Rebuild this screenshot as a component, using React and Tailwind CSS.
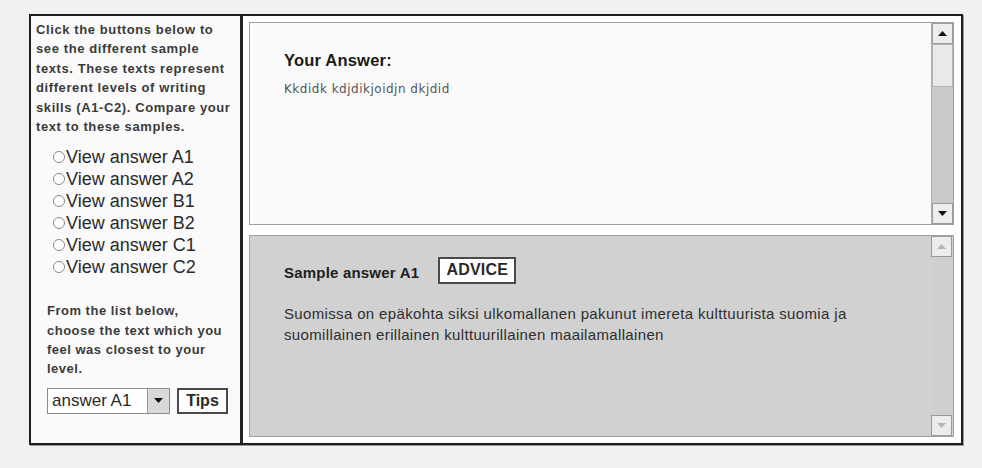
import { useState } from 'react';

const LEVELS = ['A1', 'A2', 'B1', 'B2', 'C1', 'C2'];

function Arrow({ dir, className }) {
  return (
    <svg width="9" height="5" viewBox="0 0 9 5" className={className}>
      {dir === 'up' ? <path d="M0 5 L4.5 0 L9 5 Z" fill="currentColor" /> : <path d="M0 0 L4.5 5 L9 0 Z" fill="currentColor" />}
    </svg>
  );
}

function ScrollBtn({ dir, faded }) {
  return (
    <div className={`h-[21px] w-[21px] flex items-center justify-center border border-[#9a9a9a] ${faded ? 'bg-[#ececec] text-[#b5b5b5]' : 'bg-[#ededed] text-[#111]'}`}>
      <Arrow dir={dir} />
    </div>
  );
}

function Radio({ label, checked, onChange }) {
  return (
    <label className="flex items-center h-[22px] cursor-pointer">
      <span className="w-[12px] h-[12px] rounded-full border-[1.5px] border-[#8a8a8a] bg-white mr-[1px] flex items-center justify-center">
        {checked && <span className="w-[5px] h-[5px] rounded-full bg-[#333]" />}
      </span>
      <input type="radio" className="hidden" checked={checked} onChange={onChange} />
      <span className="text-[18px] leading-[22px] text-[#2a2a2a]">{label}</span>
    </label>
  );
}

export default function App() {
  const [level, setLevel] = useState(null);

  return (
    <div className="w-[982px] h-[468px] bg-[#f1f1f1] pt-[14px] pl-[29px] font-['Liberation_Sans',Arial,sans-serif]">
      <div className="flex w-[934px] h-[431px] border-2 border-[#1e1e1e] shadow-[1px_1px_0_#9a9a9a]">
        {/* Left: instructions + level picker */}
        <div className="w-[212px] bg-[#fafafa] border-r-[3px] border-[#262626] pl-[5px] pt-[4px] flex flex-col">
          <p className="text-[13px] leading-[19.4px] font-bold text-[#3a3a3a] tracking-[0.6px] whitespace-nowrap">
            Click the buttons below to<br />
            see the different sample<br />
            texts. These texts represent<br />
            different levels of writing<br />
            skills (A1-C2). Compare your<br />
            text to these samples.
          </p>

          <div className="mt-[10px] pl-[17px] flex flex-col">
            {LEVELS.map((l) => (
              <Radio key={l} label={`View answer ${l}`} checked={level === l} onChange={() => setLevel(l)} />
            ))}
          </div>

          <p className="mt-[23px] pl-[11px] text-[13px] leading-[19.3px] font-bold text-[#3a3a3a] tracking-[0.5px] whitespace-nowrap">
            From the list below,<br />
            choose the text which you<br />
            feel was closest to your<br />
            level.
          </p>

          <div className="mt-[9px] pl-[11px] flex items-center gap-[7px]">
            <div className="flex h-[26px] w-[123px] border border-[#8c8c8c] bg-white">
              <span className="flex-1 pl-[4px] text-[17px] leading-[24px] text-[#2a2a2a]">answer A1</span>
              <span className="w-[22px] bg-[#d9d9d9] border-l border-[#9a9a9a] flex items-center justify-center text-[#111]">
                <Arrow dir="down" />
              </span>
            </div>
            <button className="h-[26px] w-[51px] border-2 border-[#4a4a4a] bg-white text-[16px] font-bold text-[#2a2a2a] leading-none">
              Tips
            </button>
          </div>
        </div>

        {/* Right: answer + sample panes */}
        <div className="flex-1 bg-white pl-[6px] pr-[7px] pt-[6px] pb-[6px] flex flex-col gap-[10px]">
          <div className="h-[203px] flex border border-[#a0a0a0] bg-[#fafafa]">
            <div className="flex-1 pl-[34px] pt-[27px]">
              <h2 className="text-[16.5px] font-bold text-[#1a1a1a] leading-[20px] tracking-[0.2px]">Your Answer:</h2>
              <p className="mt-[12px] text-[12px] text-[#555] font-['DejaVu_Sans',sans-serif] leading-[14px] tracking-[0.5px]">Kkdidk kdjdikjoidjn dkjdid</p>
            </div>
            <div className="w-[22px] flex flex-col bg-[#c9c9c9] border-l border-[#b0b0b0]">
              <ScrollBtn dir="up" />
              <div className="h-[43px] bg-[#e9e9e9] border border-[#b4b4b4]" />
              <div className="flex-1" />
              <ScrollBtn dir="down" />
            </div>
          </div>

          <div className="flex-1 flex border border-[#a3a3a3] bg-[#d1d1d1]">
            <div className="flex-1 pl-[34px] pt-[20px]">
              <div className="flex items-center gap-[19px]">
                <span className="mt-[6px] text-[15px] font-bold text-[#1e1e1e] tracking-[0.2px]">Sample answer A1</span>
                <button className="h-[27px] w-[78px] border-2 border-[#4a4a4a] bg-white text-[16px] font-semibold text-[#2a2a2a] leading-none tracking-[0.2px]">
                  ADVICE
                </button>
              </div>
              <p className="mt-[18px] text-[15px] leading-[21px] text-[#2e2e2e] tracking-[0.35px] whitespace-nowrap">
                Suomissa on epäkohta siksi ulkomallanen pakunut imereta kulttuurista suomia ja
                <br />
                suomillainen erillainen kulttuurillainen maailamallainen
              </p>
            </div>
            <div className="w-[22px] flex flex-col bg-[#cfcfcf]">
              <ScrollBtn dir="up" faded />
              <div className="flex-1" />
              <ScrollBtn dir="down" faded />
            </div>
          </div>
        </div>
      </div>
    </div>
  );
}
